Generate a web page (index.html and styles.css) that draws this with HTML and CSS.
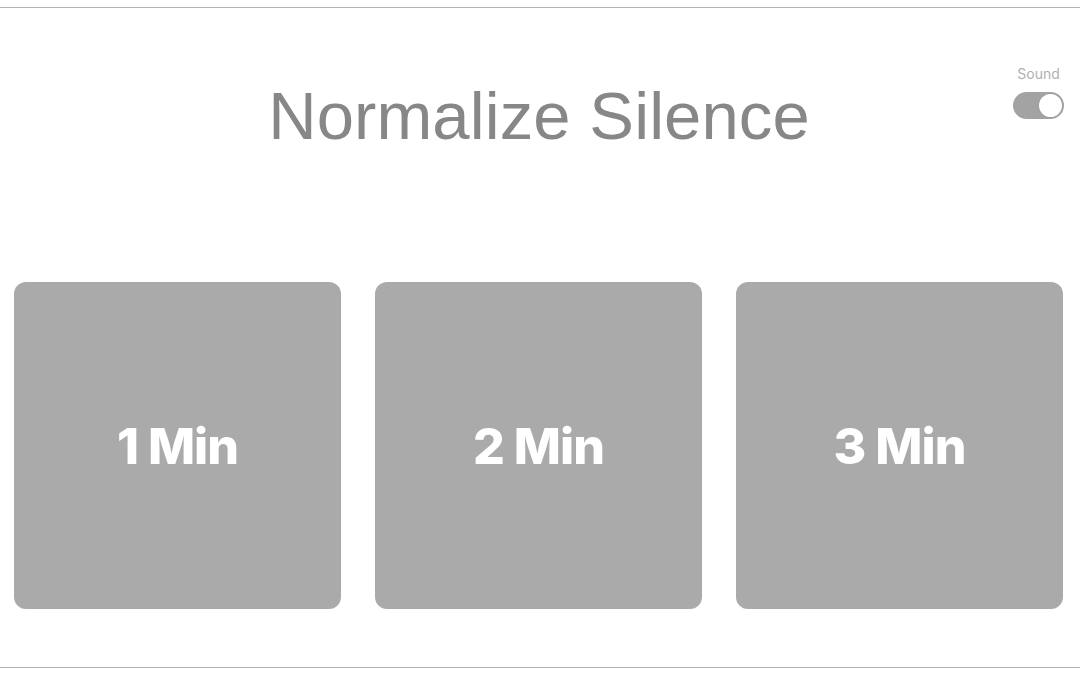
FILE: index.html
```html
<!DOCTYPE html>
<html>
<head>
<meta charset="utf-8">
<link rel="stylesheet" href="styles.css">
</head>
<body>
<div class="frame">
  <header class="header">
    <div class="spacer"></div>
    <h1 class="title">Normalize Silence</h1>
    <div class="sound">
      <span class="sound-label">Sound</span>
      <div class="switch"><div class="knob"></div></div>
    </div>
  </header>
  <div class="cards">
    <div class="card">1 Min</div>
    <div class="card">2 Min</div>
    <div class="card">3 Min</div>
  </div>
</div>
</body>
</html>
```
FILE: styles.css
```css
html, body {
  margin: 0;
  padding: 0;
  background: #fff;
}
body {
  width: 1080px;
  height: 675px;
  overflow: hidden;
  padding-top: 7px;
  box-sizing: border-box;
}
.frame {
  height: 661px;
  box-sizing: border-box;
  border-top: 1px solid #b4b4b4;
  border-bottom: 1px solid #b4b4b4;
  padding: 0 16px 0 14px;
  display: flex;
  flex-direction: column;
}
.header {
  display: grid;
  grid-template-columns: 1fr auto 1fr;
  align-items: start;
  padding-top: 57px;
  height: 216px;
  box-sizing: border-box;
}
.title {
  margin: 12px 0 0 0;
  font-family: "Liberation Sans", Arial, sans-serif;
  font-weight: 400;
  font-size: 67px;
  line-height: 77px;
  color: #878787;
  text-align: center;
  letter-spacing: 0.1px;
}
.sound {
  justify-self: end;
  display: flex;
  flex-direction: column;
  align-items: center;
  gap: 9px;
}
.sound-label {
  font-family: Inter, "Liberation Sans", sans-serif;
  font-size: 14px;
  line-height: 18px;
  color: #b0b0b0;
}
.switch {
  width: 51px;
  height: 27px;
  border-radius: 14px;
  background: #a3a3a3;
  position: relative;
  box-sizing: border-box;
}
.knob {
  position: absolute;
  right: 2px;
  top: 2px;
  width: 23px;
  height: 23px;
  border-radius: 50%;
  background: #fff;
  box-shadow: 0 0 0 0.5px #999;
}
.cards {
  display: flex;
  gap: 34px;
  margin-top: 58px;
}
.card {
  width: 327px;
  height: 327px;
  border-radius: 12px;
  background: #aaaaaa;
  display: flex;
  align-items: center;
  justify-content: center;
  font-family: Inter, "Liberation Sans", sans-serif;
  font-weight: 800;
  font-size: 50px;
  color: #fff;
  letter-spacing: -1px;
}
```
